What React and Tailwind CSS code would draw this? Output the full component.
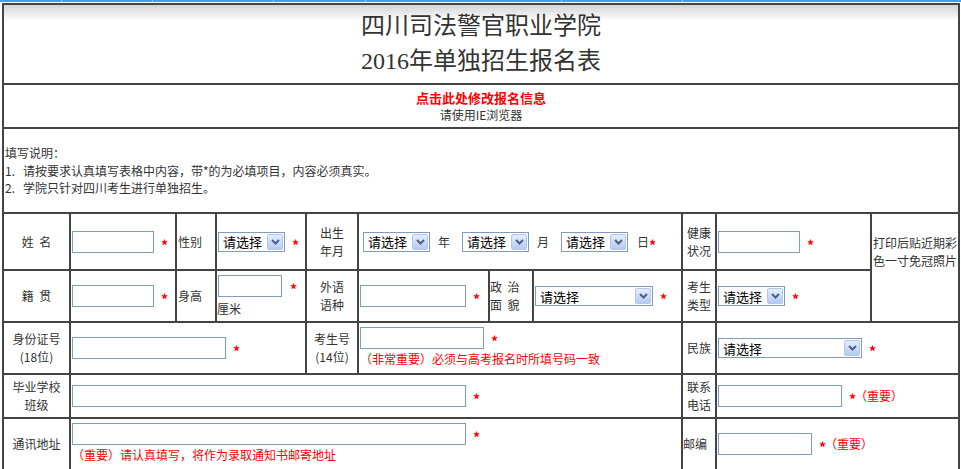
import React from "react";

const FONT = "font-['Noto_Sans_CJK_SC','Noto_Sans',sans-serif]";

function Star({ ml = "ml-[7px]" }) {
  return (
    <span className={`inline-block w-[6px] ${ml} text-center text-[14px] font-bold leading-none text-[#ff0000] translate-y-[3px]`}>*</span>
  );
}

function Box({ w }) {
  return <span className={`inline-block h-[22px] shrink-0 border border-[#7f9db9] bg-white ${w}`} />;
}

function Sel({ w }) {
  return (
    <span className={`flex h-[20px] shrink-0 items-center border border-[#7f9db9] bg-white ${w}`}>
      <span className="flex-1 pl-[4px] text-[13px] leading-none text-black">请选择</span>
      <span className="mr-[1px] flex h-[16px] w-[16px] items-center justify-center rounded-[2px] border border-[#b3c6ef] bg-gradient-to-b from-[#e4edfd] to-[#b5caf4]">
        <svg width="9" height="6" viewBox="0 0 9 6">
          <path d="M1 1L4.5 4.5L8 1" fill="none" stroke="#4d6185" strokeWidth="2" />
        </svg>
      </span>
    </span>
  );
}

function Label({ children }) {
  return (
    <div className="flex flex-col items-center justify-center bg-white text-[12px] leading-[18px] text-[#333]">
      {children}
    </div>
  );
}

function Cell({ className = "", children }) {
  return <div className={`flex items-center bg-white pl-[1px] text-[12px] ${className}`}>{children}</div>;
}

export default function App() {
  return (
    <div className={`w-[961px] bg-white ${FONT}`}>
      <div className="flex h-[2px] bg-[#4a9de6]">
        <span className="w-[62px] border-r border-[#8cc2f0]" />
        <span className="w-[91px] border-r border-[#8cc2f0]" />
        <span className="w-[121px] border-r border-[#8cc2f0]" />
        <span className="w-[92px] border-r border-[#8cc2f0]" />
        <span className="w-[196px] border-r border-[#8cc2f0]" />
        <span className="w-[121px] border-r border-[#8cc2f0]" />
      </div>
      <div className="ml-[2px] mt-[1px] flex w-[958px] flex-col gap-[2px] bg-[#444] p-[2px]">
        <div className="flex h-[78px] flex-col items-center justify-center bg-[linear-gradient(to_bottom,#d4d4d4,#ffffff_16px)] font-['Liberation_Serif','Noto_Sans_CJK_SC',serif] text-[24px] leading-[35px] text-[#333]">
          <div>四川司法警官职业学院</div>
          <div>2016年单独招生报名表</div>
        </div>
        <div className="flex h-[42px] flex-col items-center justify-center bg-white">
          <div className="text-[13px] font-bold leading-[15px] text-[#ff0000]">点击此处修改报名信息</div>
          <div className="mt-[2px] text-[12px] leading-[15px] text-[#333]">请使用IE浏览器</div>
        </div>
        <div className="flex h-[83px] flex-col justify-center bg-white pl-[1px] text-[12px] leading-[17.5px] text-[#333]">
          <div>填写说明：</div>
          <div>
            <span className="inline-block w-[18px]">1.</span>请按要求认真填写表格中内容，带*的为必填项目，内容必须真实。
          </div>
          <div>
            <span className="inline-block w-[18px]">2.</span>学院只针对四川考生进行单独招生。
          </div>
        </div>
        <div className="grid grid-cols-[65px_104px_38px_88px_50px_129px_42px_147px_32px_153px_86px] grid-rows-[55px_50px_50px_42px_50px] gap-[2px] text-[#333]">
          {/* Row 1 */}
          <Label>姓&nbsp;&nbsp;名</Label>
          <Cell>
            <Box w="w-[82px]" />
            <Star />
          </Cell>
          <Cell className="pl-0">性别</Cell>
          <Cell>
            <Sel w="w-[67px]" />
            <Star />
          </Cell>
          <Label>
            <div>出生</div>
            <div>年月</div>
          </Label>
          <Cell className="col-span-3 pl-[4px]">
            <Sel w="w-[67px]" />
            <span className="ml-[8px] mr-[12px]">年</span>
            <Sel w="w-[67px]" />
            <span className="ml-[8px] mr-[12px]">月</span>
            <Sel w="w-[67px]" />
            <span className="ml-[9px]">日</span>
            <Star ml="ml-0" />
          </Cell>
          <Label>
            <div>健康</div>
            <div>状况</div>
          </Label>
          <Cell>
            <Box w="w-[82px]" />
            <Star />
          </Cell>
          <div className="row-span-2 flex flex-col bg-white pl-[1px] pt-[20px] text-[12px] leading-[18px] text-[#333]">
            <div>打印后贴近期彩</div>
            <div>色一寸免冠照片</div>
          </div>

          {/* Row 2 */}
          <Label>籍&nbsp;&nbsp;贯</Label>
          <Cell>
            <Box w="w-[82px]" />
            <Star />
          </Cell>
          <Cell className="pl-0">身高</Cell>
          <div className="flex flex-col items-start bg-white pl-[1px] pt-[4px] text-[12px]">
            <div className="flex items-center">
              <Box w="w-[64px]" />
              <Star ml="ml-[8px]" />
            </div>
            <div className="-ml-[1px] mt-[4px] leading-[16px]">厘米</div>
          </div>
          <Label>
            <div>外语</div>
            <div>语种</div>
          </Label>
          <Cell>
            <Box w="w-[106px]" />
            <Star />
          </Cell>
          <div className="flex flex-col justify-center bg-white text-[12px] leading-[18px] text-[#333]">
            <div>政&nbsp;&nbsp;治</div>
            <div>面&nbsp;&nbsp;貌</div>
          </div>
          <Cell>
            <Sel w="w-[118px]" />
            <Star />
          </Cell>
          <Label>
            <div>考生</div>
            <div>类型</div>
          </Label>
          <Cell>
            <Sel w="w-[67px]" />
            <Star />
          </Cell>

          {/* Row 3 */}
          <Label>
            <div>身份证号</div>
            <div>(18位)</div>
          </Label>
          <Cell className="col-span-3">
            <Box w="w-[154px]" />
            <Star />
          </Cell>
          <Label>
            <div>考生号</div>
            <div>(14位)</div>
          </Label>
          <div className="col-span-3 flex flex-col items-start bg-white pl-[1px] pt-[4px] text-[12px]">
            <div className="flex items-center">
              <Box w="w-[124px]" />
              <Star />
            </div>
            <div className="mt-[2px] leading-[16px] text-[#ff0000]">（非常重要）必须与高考报名时所填号码一致</div>
          </div>
          <Label>民族</Label>
          <Cell className="col-span-2">
            <Sel w="w-[144px]" />
            <Star />
          </Cell>

          {/* Row 4 */}
          <Label>
            <div>毕业学校</div>
            <div>班级</div>
          </Label>
          <Cell className="col-span-7">
            <Box w="w-[394px]" />
            <Star />
          </Cell>
          <Label>
            <div>联系</div>
            <div>电话</div>
          </Label>
          <Cell className="col-span-2">
            <Box w="w-[124px]" />
            <Star />
            <span className="text-[#ff0000]">（重要）</span>
          </Cell>

          {/* Row 5 */}
          <Label>通讯地址</Label>
          <div className="col-span-7 flex flex-col items-start bg-white pl-[1px] pt-[4px] text-[12px]">
            <div className="flex items-center">
              <Box w="w-[394px]" />
              <Star />
            </div>
            <div className="mt-[2px] leading-[16px] text-[#ff0000]">（重要）请认真填写，将作为录取通知书邮寄地址</div>
          </div>
          <div className="flex items-center bg-white text-[12px] text-[#333]">邮编</div>
          <Cell className="col-span-2">
            <Box w="w-[94px]" />
            <Star />
            <span className="text-[#ff0000]">（重要）</span>
          </Cell>
        </div>
      </div>
    </div>
  );
}
